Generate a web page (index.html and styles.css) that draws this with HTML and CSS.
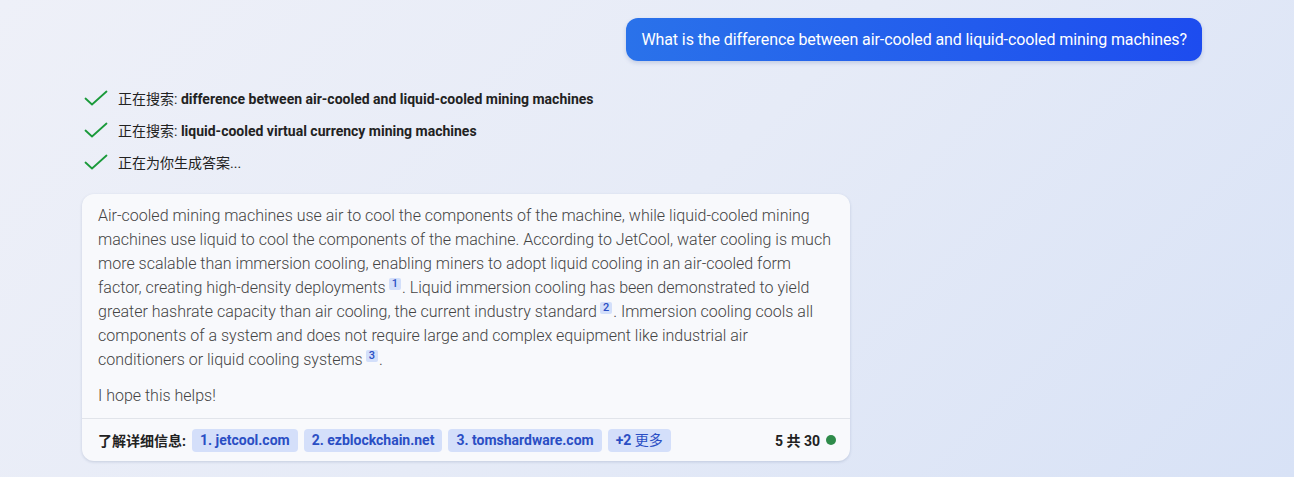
FILE: index.html
```html
<!DOCTYPE html>
<html lang="zh">
<head>
<meta charset="utf-8">
<link rel="stylesheet" href="styles.css">
</head>
<body>
<div class="page">
  <div class="user-row">
    <div class="user-bubble">What is the difference between air-cooled and liquid-cooled mining machines?</div>
  </div>
  <ul class="steps">
    <li class="step"><svg class="check" viewBox="0 0 24 16" width="24" height="16"><path d="M1.5 8.5 L8 14.5 L22.5 1.5" fill="none" stroke="#1a9a3a" stroke-width="1.8" stroke-linecap="round" stroke-linejoin="round"/></svg><span class="step-text">正在搜索: <b>difference between air-cooled and liquid-cooled mining machines</b></span></li>
    <li class="step"><svg class="check" viewBox="0 0 24 16" width="24" height="16"><path d="M1.5 8.5 L8 14.5 L22.5 1.5" fill="none" stroke="#1a9a3a" stroke-width="1.8" stroke-linecap="round" stroke-linejoin="round"/></svg><span class="step-text">正在搜索: <b>liquid-cooled virtual currency mining machines</b></span></li>
    <li class="step"><svg class="check" viewBox="0 0 24 16" width="24" height="16"><path d="M1.5 8.5 L8 14.5 L22.5 1.5" fill="none" stroke="#1a9a3a" stroke-width="1.8" stroke-linecap="round" stroke-linejoin="round"/></svg><span class="step-text">正在为你生成答案...</span></li>
  </ul>
  <div class="card">
    <div class="card-body">
      <p>Air-cooled mining machines use air to cool the components of the machine, while liquid-cooled mining machines use liquid to cool the components of the machine. According to JetCool, water cooling is much more scalable than immersion cooling, enabling miners to adopt liquid cooling in an air-cooled form factor, creating high-density deployments<sup class="cite">1</sup>. Liquid immersion cooling has been demonstrated to yield greater hashrate capacity than air cooling, the current industry standard<sup class="cite">2</sup>. Immersion cooling cools all components of a system and does not require large and complex equipment like industrial air conditioners or liquid cooling systems<sup class="cite">3</sup>.</p>
      <p>I hope this helps!</p>
    </div>
    <div class="card-foot">
      <span class="learn">了解详细信息:</span>
      <span class="chip">1. jetcool.com</span>
      <span class="chip">2. ezblockchain.net</span>
      <span class="chip">3. tomshardware.com</span>
      <span class="chip chip-more"><b>+2</b> 更多</span>
      <span class="count">5 共 30 <span class="dot"></span></span>
    </div>
  </div>
</div>
</body>
</html>
```
FILE: styles.css
```css
html, body {
  margin: 0;
  padding: 0;
}
body {
  width: 1294px;
  height: 477px;
  overflow: hidden;
  background: linear-gradient(135deg, #eef0f8 0%, #e6ebf7 50%, #d8e2f6 100%);
  font-family: Roboto, "Noto Sans CJK SC", sans-serif;
  color: #222;
}
.page {
  padding: 18px 92px 0 82px;
  display: flex;
  flex-direction: column;
}
.user-row {
  display: flex;
  justify-content: flex-end;
}
.user-bubble {
  background: linear-gradient(90deg, #2a72ea 0%, #1d4cef 100%);
  color: #fff;
  font-size: 16px;
  line-height: 43px;
  height: 43px;
  padding: 0 15px;
  border-radius: 12px;
  box-shadow: 0 2px 4px rgba(30, 60, 140, 0.18);
  letter-spacing: -0.1px;
}
.steps {
  list-style: none;
  margin: 26px 0 0 0;
  padding: 0 0 0 2px;
  display: flex;
  flex-direction: column;
  gap: 10px;
}
.step {
  display: flex;
  align-items: center;
  height: 22px;
  font-size: 14px;
  color: #222;
}
.check {
  margin-right: 10px;
  flex: none;
}
.step-text b {
  font-weight: 700;
  color: #222;
}
.card {
  margin-top: 21px;
  width: 768px;
  background: #f8f9fc;
  border-radius: 12px;
  box-shadow: 0 1px 3px rgba(40, 60, 110, 0.18);
  overflow: hidden;
}
.card-body {
  padding: 10px 16px 10px 16px;
}
.card-body p {
  margin: 0;
  font-size: 16px;
  font-weight: 300;
  line-height: 24px;
  color: #444;
}
.card-body p + p {
  margin-top: 12px;
}
.cite {
  display: inline-block;
  vertical-align: 6px;
  background: #d3dffa;
  color: #2a4ec4;
  font-size: 11px;
  font-weight: 500;
  line-height: 12px;
  padding: 0 3px;
  border-radius: 2px;
  margin-left: 3px;
  margin-right: 1px;
}
.card-foot {
  border-top: 1px solid #e1e4ea;
  height: 42px;
  padding: 0 14px 0 16px;
  display: flex;
  align-items: center;
  gap: 6px;
  font-size: 14px;
}
.learn {
  font-weight: 700;
  color: #222;
}
.chip {
  background: #d4dffa;
  color: #2a4ec4;
  font-weight: 700;
  height: 23px;
  line-height: 23px;
  padding: 0 8px;
  border-radius: 4px;
}
.chip-more {
  font-weight: 400;
}
.chip-more b {
  font-weight: 700;
}
.count {
  margin-left: auto;
  font-weight: 700;
  color: #222;
  display: flex;
  align-items: center;
  gap: 4px;
}
.dot {
  width: 10px;
  height: 10px;
  border-radius: 50%;
  background: #2e8b4a;
  margin-left: 2px;
}
```
